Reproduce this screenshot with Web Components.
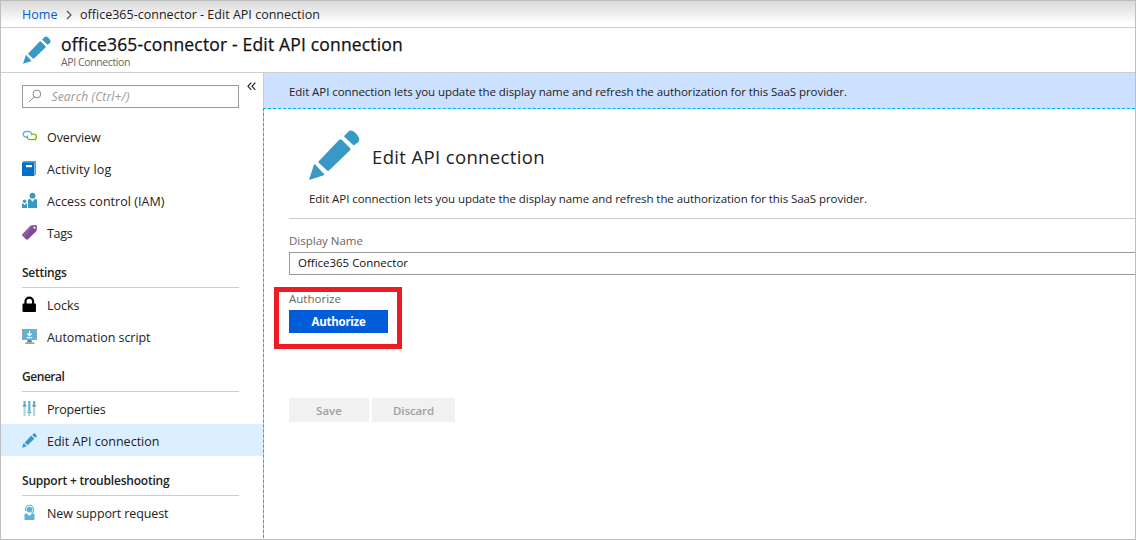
<!DOCTYPE html>
<html lang="en">
<head>
<meta charset="utf-8">
<title>office365-connector - Edit API connection</title>
<style>
html,body{margin:0;height:100%}
body{font-family:"Open Sans","Noto Sans",sans-serif;background:#fff;overflow:hidden}
</style>
</head>
<body>
<portal-app></portal-app>
<script>
const define=(name,cls)=>customElements.define(name,cls);
class Base extends HTMLElement{
  paint(html){
    if(!this.shadowRoot)this.attachShadow({mode:'open'});
    this.shadowRoot.innerHTML=html;
  }
}

/* A single line of text whose tracking is adjusted to fill the width in "w". */
define('ui-text',class extends Base{
  connectedCallback(){
    this.paint(`<style>:host{display:block;white-space:nowrap;width:max-content;flex:none}span{display:inline-block}</style><span><slot></slot></span>`);
    const w=parseFloat(this.getAttribute('w'));
    const span=this.shadowRoot.querySelector('span');
    if(w){
      span.style.letterSpacing='0.001px';
      const n=this.textContent.length;
      span.style.letterSpacing=((w-span.getBoundingClientRect().width)/n).toFixed(3)+'px';
    }
  }
});

const pencil='<g fill="#3999c6"><path d="M0 50 5 34.5q.6-.6 1.200 0L15 44q.6.8-.2 1.300Z"/><path d="M9.500 31.500 30 10q1.500-1.500 3 0l8 8q1 1.200 0 2.300L20 40.500q-1 .8-2 0L9.500 32.500q-.5-.5 0-1Z"/><path d="M35.500 5.500 39 2q3-3 7 .5 6 5.500 3.500 9.500L45.500 15q-.7.500-1.400 0L35.500 7q-.5-.7 0-1.500Z"/></g>';
const icons={
  pencil:['0 0 51 50',pencil],
  link:['0 0 15 15','<g fill="none" stroke-width="1.300"><path stroke="#59b4d9" d="M6.200 8.200H3.600A2.900 2.900 0 0 1 3.600 2.500H6.800A2.900 2.900 0 0 1 9.500 6.300"/><path stroke="#7fba00" d="M9 5.200h2.700a2.700 2.700 0 0 1 0 5.400H8A2.700 2.700 0 0 1 5.600 6.500"/></g>'],
  book:['0 0 15 15','<path fill="#6a9fc9" d="M1.500 0H14v14h-1V2H0Z"/><path fill="#0072c6" d="M0 1.500h12.500V15H0Z"/><path fill="#fff" d="M4 4h6v2.200H4Z"/>'],
  people:['0 0 15 15','<g fill="#3999c6"><circle cx="10.500" cy="2.700" r="2.900"/><path d="M6 7.500q0-1.800 2-1.800l2.500 3 2.500-3q2 0 2 1.800V15H6Z"/><circle cx="2.500" cy="8.200" r="1.700"/><path d="M0 11q0-.8 1-.8l1.500 2 1.500-2q1 0 1 .8v4H0Z"/></g>'],
  tag:['0 0 15 15','<path fill="#804998" d="M8.500.8 13.500 0Q15 0 15 1.500L14.500 6 6 14.300Q5 15.200 4 14.200L.5 10.800Q-.4 9.900.6 8.900Z"/><path fill="#9a62ad" d="M.6 8.900 8.500.8 11 .4 2.800 13 .5 10.800Q-.4 9.900.6 8.900Z" opacity=".7"/><circle cx="12.500" cy="2.700" r="1.100" fill="#fff"/>'],
  lock:['0 0 15 15','<path d="M3.500 7V4.500a3.800 3.800 0 0 1 7.600 0V7" fill="none" stroke="#000" stroke-width="2.200"/><rect x=".5" y="6.500" width="13.500" height="8.500" rx="1" fill="#000"/>'],
  monitor:['0 0 15 15','<path fill="#a0a1a2" d="M0 0h15v11H0Z"/><path fill="#59b4d9" d="M1 1h13v9H1Z"/><path fill="#7a7a7a" d="M5.500 11h4l.5 2.500H5Z"/><path fill="#a0a1a2" d="M3 13.400h9.500V15H3Z"/><path fill="none" stroke="#fff" stroke-width="1.100" d="M7.500 1.500v5M5.300 4.500l2.200 2.200 2.200-2.200M4.800 8.600h5.400"/>'],
  sliders:['0 0 15 15','<path fill="#a9d9ec" d="M1.500 5h2.200v10H1.500ZM6.200 11h2.200v4H6.200ZM11 5h2.200v10H11Z"/><path fill="#59b4d9" d="M1.500 0h2.200v4H1.500ZM6.200 0h2.200v10H6.200ZM11 0h2.200v4H11Z"/><path fill="#8b8c8d" d="M.8 4h3.600v1.500H.8ZM5.500 10.500h3.600V12H5.500ZM10.300 4h3.600v1.500h-3.600Z"/>'],
  support:['0 0 15 15','<g fill="#59b4d9"><circle cx="7.500" cy="4.600" r="2.900"/><path d="M2.500 9.500q0-1 1-1h1.300L7.500 11l2.800-2.500h1.200q1 0 1 1V15h-10Z"/><path fill="none" stroke="#59b4d9" stroke-width="1.100" d="M3.600 6V4.200a3.900 3.900 0 0 1 7.800 0v1.500q0 2-2.200 2.600"/></g>'],
  search:['0 0 15 15','<g fill="none" stroke="#888" stroke-width="1"><circle cx="8.900" cy="5" r="3.900"/><path d="M6.100 7.800 1 13"/></g>'],
  chevron:['0 0 6 10','<path d="m1 1 4 4-4 4" fill="none" stroke="#555" stroke-width="1.200"/>'],
  collapse:['0 0 9 9','<path d="M4.300.7 1 4.300l3.300 3.600M8.300.7 5 4.300l3.300 3.600" fill="none" stroke="#222" stroke-width="1.200"/>']
};
define('ui-icon',class extends Base{
  connectedCallback(){
    const [box,art]=icons[this.getAttribute('name')];
    this.paint(`<style>:host{display:block;width:15px;height:15px;flex:none}svg{display:block;width:100%;height:100%;overflow:visible}</style><svg viewBox="${box}">${art}</svg>`);
  }
});

define('bread-crumb',class extends Base{
  connectedCallback(){
    this.paint(`<style>
:host{display:flex;align-items:center;box-sizing:border-box;height:27px;padding:1px 0 0 21px;border-bottom:1px solid #cfcfcf;background:linear-gradient(#d9d9d9,#fff 85%);font-size:12.500px;line-height:24px;color:#222}
.home{color:#015cda}ui-icon{width:6px;height:10px;margin:0 7.500px 0 9px}</style>
<ui-text class="home" w="35.500">Home</ui-text><ui-icon name="chevron"></ui-icon><ui-text w="240">office365-connector - Edit API connection</ui-text>`);
  }
});

define('blade-header',class extends Base{
  connectedCallback(){
    this.paint(`<style>
:host{display:flex;box-sizing:border-box;height:45px;border-bottom:1px solid #cfcfcf;padding:8px 0 0 22px}
ui-icon{width:28px;height:28px}.t{margin:-5px 0 0 10px}
.a{font-size:17.500px;line-height:26px;color:#111;-webkit-text-stroke:.25px #111}.b{font-size:10.500px;line-height:12px;color:#666;margin-top:-1.500px}</style>
<ui-icon name="pencil"></ui-icon><div class="t"><ui-text class="a" w="342">office365-connector - Edit API connection</ui-text><ui-text class="b" w="69">API Connection</ui-text></div>`);
  }
});

define('nav-item',class extends Base{
  connectedCallback(){
    this.paint(`<style>
:host{display:flex;align-items:center;box-sizing:border-box;height:32px;padding-left:21px;font-size:12.500px;line-height:30px;color:#222}
:host([selected]){background:#dcefff}
ui-text{margin:3px 0 0 10px}</style>
<ui-icon name="${this.getAttribute('icon')}"></ui-icon><ui-text w="${this.getAttribute('w')}">${this.getAttribute('label')}</ui-text>`);
  }
});
define('nav-heading',class extends Base{
  connectedCallback(){
    this.paint(`<style>
:host{display:block;box-sizing:border-box;height:40px;margin:0 24px 0 21px;padding-top:13px;border-bottom:1px solid #ccc;font-size:12px;line-height:24px;font-weight:600;color:#222}</style>
<ui-text w="${this.getAttribute('w')}">${this.getAttribute('label')}</ui-text>`);
  }
});
define('search-box',class extends Base{
  connectedCallback(){
    this.paint(`<style>
:host{display:flex;box-sizing:border-box;width:217px;height:23px;border:1px solid #999;padding-left:5px;align-items:center;font-size:12px;line-height:20px;font-style:italic;color:#999}
ui-text{margin-left:8.500px}</style>
<ui-icon name="search"></ui-icon><ui-text w="78">Search (Ctrl+/)</ui-text>`);
  }
});
define('side-nav',class extends Base{
  connectedCallback(){
    this.paint(`<style>
:host{display:block;width:262px;flex:none}
.top{display:flex;height:35px;padding:12px 0 0 21px}
.top ui-icon{width:9px;height:9px;margin:-3px 0 0 8px}</style>
<div class="top"><search-box></search-box><ui-icon name="collapse"></ui-icon></div>
<nav>
<nav-item icon="link" label="Overview" w="53.500"></nav-item>
<nav-item icon="book" label="Activity log" w="64.500"></nav-item>
<nav-item icon="people" label="Access control (IAM)" w="117.500"></nav-item>
<nav-item icon="tag" label="Tags" w="25.500"></nav-item>
<nav-heading label="Settings" w="44.500"></nav-heading>
<nav-item icon="lock" label="Locks" w="32.500"></nav-item>
<nav-item icon="monitor" label="Automation script" w="103.500"></nav-item>
<nav-heading label="General" w="42.500"></nav-heading>
<nav-item icon="sliders" label="Properties" w="58.500"></nav-item>
<nav-item icon="pencil" label="Edit API connection" w="112.500" selected></nav-item>
<nav-heading label="Support + troubleshooting" w="147.500"></nav-heading>
<nav-item icon="support" label="New support request" w="121.500"></nav-item>
</nav>`);
  }
});

define('info-banner',class extends Base{
  connectedCallback(){
    this.paint(`<style>:host{display:block;height:35px;border-left:1px solid #ccc;background:#cce0ff;box-sizing:border-box;padding:7px 0 0 25px;font-size:11.500px;line-height:24px;color:#222}</style>
<ui-text w="558">${this.getAttribute('message')}</ui-text>`);
  }
});
define('ui-button',class extends Base{
  connectedCallback(){
    this.paint(`<style>
:host{display:flex;align-items:center;justify-content:center;box-sizing:border-box;height:24px;padding-top:1px;background:#f1f1f1;color:#a0a0a0;font-size:11.500px;font-weight:600;line-height:20px}
:host([primary]){height:23px;background:#015cda;color:#fff;font-weight:700}</style>
<ui-text w="${this.getAttribute('w')}">${this.getAttribute('label')}</ui-text>`);
  }
});
define('edit-form',class extends Base{
  connectedCallback(){
    this.paint(`<style>
:host{display:block;height:430px;border-left:1px dashed #00b4f0;border-top:1px dashed #00b4f0;box-sizing:border-box;padding-left:25px;font-size:11.500px;color:#222;background:linear-gradient(#fff,#fff) padding-box,linear-gradient(#cce0ff,#ccc 2px) border-box}
.hero{display:flex;height:110px;box-sizing:border-box;border-bottom:1px solid #ccc;padding:21px 0 0 20px;flex-wrap:wrap;align-content:flex-start}
.hero ui-icon{width:51px;height:50px}
.h{font-size:18.500px;line-height:28px;margin:13px 500px 0 12px}
.d{line-height:24px;margin-top:7px}
.label{color:#666;line-height:20px}
.l1{margin-top:12px}
.input{box-sizing:border-box;height:23px;border:1px solid #999;border-right:0;padding-left:8px;line-height:20px;color:#111;margin-top:1px}
.auth{position:relative;margin-top:14px;width:99px}
.mark{position:absolute;left:-15px;top:-2px;width:118px;height:52px;border:5px solid #ed1c24}
.actions{display:flex;gap:3px;margin-top:65px}
</style>
<div class="hero"><ui-icon name="pencil"></ui-icon><ui-text class="h" w="173">Edit API connection</ui-text><ui-text class="d" w="558">Edit API connection lets you update the display name and refresh the authorization for this SaaS provider.</ui-text></div>
<ui-text class="label l1" w="74">Display Name</ui-text>
<div class="input"><ui-text w="110">Office365 Connector</ui-text></div>
<div class="auth"><ui-text class="label" w="52">Authorize</ui-text><ui-button primary label="Authorize" w="54" style="margin-top:1px"></ui-button><div class="mark"></div></div>
<div class="actions"><ui-button label="Save" w="26" style="width:80px"></ui-button><ui-button label="Discard" w="41" style="width:83px"></ui-button></div>`);
  }
});
define('portal-app',class extends Base{
  connectedCallback(){
    this.paint(`<style>
:host{display:block;box-sizing:border-box;width:1136px;height:540px;border:1px solid #bfbfbf;overflow:hidden;background:#fff}
.body{display:flex}main{flex:1;min-width:0}</style>
<bread-crumb></bread-crumb><blade-header></blade-header>
<div class="body"><side-nav></side-nav><main><info-banner message="Edit API connection lets you update the display name and refresh the authorization for this SaaS provider."></info-banner><edit-form></edit-form></main></div>`);
  }
});
</script>
</body>
</html>
